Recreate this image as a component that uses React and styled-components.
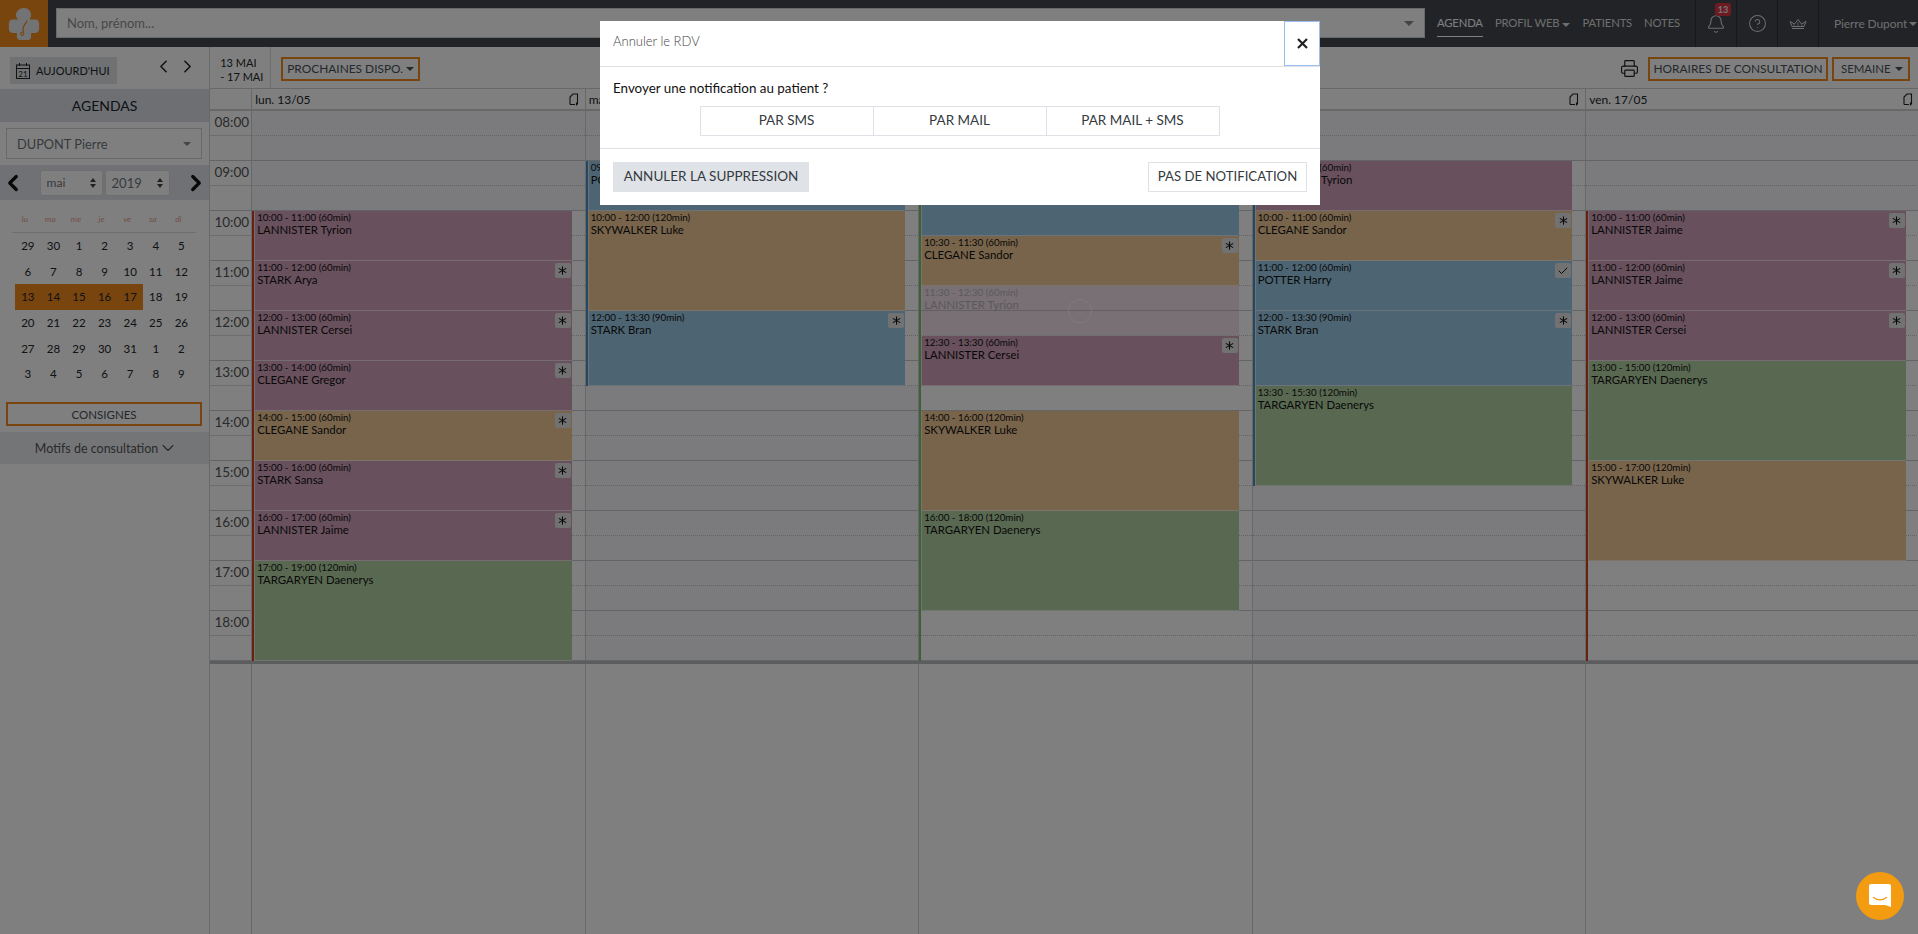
import styled, { createGlobalStyle } from "styled-components";
import { Bell, Check, ChevronDown, ChevronLeft, ChevronRight, Asterisk, Printer, CircleHelp } from "lucide-react";

const FONT = `"Lato", "Open Sans", sans-serif`;
const ORANGE = "#f28a1e";

const GlobalStyle = createGlobalStyle`
  * { box-sizing: border-box; }
  html, body { margin: 0; height: 100%; overflow: hidden; }
  body { font-family: ${FONT}; color: #212529; background: #fff; }
`;

const Page = styled.div`
  display: flex;
  flex-direction: column;
  height: 100vh;
  overflow: hidden;
`;

// Top navigation
const TopBar = styled.header`
  display: flex;
  align-items: stretch;
  flex: 0 0 47px;
  background: #43474d;
`;

const LogoBox = styled.div`
  flex: 0 0 48px;
  display: flex;
  align-items: center;
  justify-content: center;
  background: ${ORANGE};
`;

const SearchBox = styled.div`
  flex: 1;
  min-width: 0;
  margin: 8px 12px 9px 8px;
  display: flex;
  align-items: center;
  justify-content: space-between;
  padding: 0 10px;
  background: #fff;
  border: 1px solid #ced4da;
  color: #8f8f8f;
  font-size: 13px;
`;

const Caret = styled.span`
  width: 0;
  height: 0;
  margin-left: ${(p) => p.$gap || 4}px;
  display: inline-block;
  border-left: ${(p) => p.$size || 4}px solid transparent;
  border-right: ${(p) => p.$size || 4}px solid transparent;
  border-top: ${(p) => p.$size || 4}px solid ${(p) => p.$color || "currentColor"};
`;

const NavLinks = styled.nav`
  display: flex;
  align-items: center;
  gap: 12px;
  padding-right: 15px;
`;

const NavLink = styled.span`
  color: ${(p) => (p.$active ? "#fff" : "#ddd")};
  font-size: 11.3px;
  letter-spacing: -0.15px;
  line-height: 18px;
  padding: 4px 0;
  white-space: nowrap;
  border-bottom: 1px solid ${(p) => (p.$active ? "#fff" : "transparent")};
`;

const NavIcon = styled.div`
  position: relative;
  flex: 0 0 41px;
  display: flex;
  align-items: center;
  justify-content: center;
  color: #ddd;
  border-left: 1px solid #2d3034;
`;

const NotifBadge = styled.span`
  position: absolute;
  top: 3px;
  left: 19px;
  width: 16px;
  height: 13px;
  border-radius: 3px;
  background: #dc3545;
  color: #eee;
  font-size: 9px;
  font-weight: 700;
  line-height: 13px;
  text-align: center;
`;

const UserMenu = styled.div`
  flex: 0 0 100px;
  min-width: 0;
  display: flex;
  align-items: center;
  padding-left: 15px;
  color: #ddd;
  font-size: 12px;
  letter-spacing: -0.1px;
  white-space: nowrap;
  border-left: 1px solid #2d3034;
`;

const Body = styled.div`
  flex: 1;
  display: flex;
  min-height: 0;
`;

// Left column
const Sidebar = styled.aside`
  flex: 0 0 210px;
  border-right: 1px solid #ccd0d5;
  display: flex;
  flex-direction: column;
`;

const SideTools = styled.div`
  flex: 0 0 42px;
  display: flex;
  align-items: flex-start;
  padding: 10px 0 0 10px;
`;

const TodayButton = styled.button`
  display: flex;
  align-items: center;
  gap: 5px;
  width: 107px;
  height: 27px;
  padding: 0 0 0 5px;
  border: 0;
  background: #dee2e6;
  color: #212529;
  font: 11px ${FONT};
  white-space: nowrap;
`;

const WeekArrows = styled.div`
  display: flex;
  gap: 3px;
  margin: -1px 0 0 36px;
  color: #212529;
`;

const SideBand = styled.div`
  display: flex;
  align-items: center;
  justify-content: center;
  height: ${(p) => p.$h}px;
  padding-left: ${(p) => p.$pl || 0}px;
  background: ${(p) => p.$bg || "#dadfe6"};
  color: ${(p) => p.$color || "#212529"};
  font-size: ${(p) => p.$size || 14}px;
`;

const AgendaSelect = styled.div`
  display: flex;
  align-items: center;
  justify-content: space-between;
  height: 31px;
  margin: 6px 7px 6px 6px;
  padding: 0 10px;
  border: 1px solid #ced4da;
  color: #6c757d;
  font-size: 12.8px;
  background: #fff;
`;

const MonthBar = styled.div`
  height: 35px;
  display: flex;
  align-items: center;
  justify-content: space-between;
  background: #e0e3e8;
  color: #111;
`;

const MonthSelects = styled.div`
  display: flex;
  gap: 2px;
`;

const MiniSelect = styled.div`
  display: flex;
  align-items: center;
  justify-content: space-between;
  width: ${(p) => p.$w}px;
  height: 26px;
  padding: 0 6px;
  border: 1px solid #ddd;
  border-radius: 3px;
  background: #fff;
  color: #6c757d;
  font-size: ${(p) => p.$size || 12}px;
`;

const Updown = styled.span`
  display: flex;
  flex-direction: column;
  gap: 2px;
  &::before,
  &::after {
    content: "";
    border-left: 3px solid transparent;
    border-right: 3px solid transparent;
  }
  &::before { border-bottom: 4px solid #444; }
  &::after { border-top: 4px solid #444; }
`;

const MiniCal = styled.div`
  padding: 12px 15px 0 15px;
  height: 202px;
`;

const WeekHead = styled.div`
  display: grid;
  grid-template-columns: repeat(7, 25.6px);
  height: 21px;
  margin: 0 -2px 0 -3px;
  border-bottom: 1px solid #ddd;
`;

const WeekName = styled.span`
  text-align: center;
  font-size: 8.5px;
  font-style: italic;
  color: #e6a090;
  line-height: 14px;
`;

const DayGrid = styled.div`
  display: grid;
  grid-template-columns: repeat(7, 25.6px);
  grid-auto-rows: 25.6px;
`;

const MiniDay = styled.span`
  display: flex;
  align-items: center;
  justify-content: center;
  font-size: 11.5px;
  color: #212529;
  background: ${(p) => (p.$sel ? ORANGE : "transparent")};
`;

const ConsignesButton = styled.div`
  display: flex;
  align-items: center;
  justify-content: center;
  height: 24px;
  margin: 0 7px 6px 6px;
  border: 2px solid ${ORANGE};
  color: #495057;
  font-size: 11.5px;
`;

// Main area
const Main = styled.main`
  flex: 1;
  min-width: 0;
  display: flex;
  flex-direction: column;
`;

const Toolbar = styled.div`
  flex: 0 0 42px;
  display: flex;
  align-items: flex-start;
  padding: 0 8px 0 0;
  border-bottom: 1px solid #ccd0d5;
`;

const RangeLabel = styled.div`
  width: 61px;
  height: 41px;
  padding: 9px 0 0 10px;
  border-right: 1px solid #ddd;
  font-size: 11px;
  line-height: 14px;
  color: #212529;
`;

const OutlineButton = styled.div`
  display: flex;
  align-items: center;
  justify-content: ${(p) => (p.$between ? "space-between" : "center")};
  width: ${(p) => p.$w}px;
  height: 24px;
  margin: 10px 0 0 ${(p) => p.$ml || 0}px;
  padding: 0 7px 1px;
  border: 2px solid ${ORANGE};
  color: #495057;
  font-size: 11.9px;
  white-space: nowrap;
`;

const SemaineLabel = styled.span`
  font-size: 11.4px;
`;

const PrintIcon = styled.div`
  margin: 12px 9px 0 auto;
  color: #212529;
`;

const Columns = styled.div`
  display: grid;
  grid-template-columns: 41px repeat(5, 333.5px);
  flex: ${(p) => (p.$fill ? 1 : "none")};
  border-bottom: ${(p) => (p.$head ? "2px solid #ccd0d5" : p.$rule ? "3px solid #b8bbbf" : "0")};
`;

const Gutter = styled.div``;

const DayHead = styled.div`
  display: flex;
  align-items: center;
  justify-content: space-between;
  height: 20px;
  padding: 0 6px 0 3px;
  border-left: 1px solid #ccd0d5;
  font-size: 12px;
  color: #212529;
`;

const DayFill = styled.div`
  border-left: 1px solid #ccd0d5;
`;

const TimeRail = styled.div`
  display: grid;
  grid-template-rows: repeat(22, 25px);
`;

const TimeCell = styled.div`
  grid-row: span 2;
  padding-top: 2px;
  padding-right: 2px;
  text-align: right;
  font-size: 13.5px;
  line-height: 18px;
  color: #555;
  border-bottom: 1px solid #c4c8cd;
  background: linear-gradient(#0000 24px, #ddd 24px, #ddd 25px, #0000 25px);
`;

const DayBody = styled.div`
  display: grid;
  grid-template-rows: repeat(22, 25px);
  grid-template-columns: minmax(0, 1fr);
  border-left: 1px solid #ccd0d5;
`;

const Slot = styled.div`
  grid-column: 1;
  grid-row: ${(p) => p.$i + 1};
  background: ${(p) => (p.$closed ? "#f6f7fa" : "#fff")};
  border-bottom: 1px ${(p) => (p.$i % 2 ? "solid #c4c8cd" : "dotted #c4c6c9")};
`;

const DayLine = styled.div`
  grid-column: 1;
  grid-row: ${(p) => p.$from + 1} / ${(p) => p.$to + 1};
  justify-self: start;
  z-index: 1;
  width: 2px;
  background: ${(p) => p.$color};
`;

const Event = styled.div`
  position: relative;
  z-index: 2;
  grid-column: 1;
  grid-row: ${(p) => p.$from + 1} / ${(p) => p.$to + 1};
  margin: 0 13px 0 2px;
  padding: 0 3px 0 2px;
  background: ${(p) => p.$bg};
  border-left: 1px solid rgba(255, 255, 255, 0.6);
  border-bottom: 1px solid rgba(255, 255, 255, 0.6);
  color: #111;
  opacity: ${(p) => (p.$faded ? 0.32 : 1)};
`;

const EventTime = styled.div`
  font-size: 9.8px;
  line-height: 13px;
  white-space: nowrap;
`;

const EventName = styled.div`
  font-size: 11.4px;
  line-height: 11px;
  white-space: nowrap;
`;

const StatusTag = styled.span`
  position: absolute;
  top: 2px;
  right: 1px;
  width: 16px;
  height: 15px;
  display: flex;
  align-items: center;
  justify-content: center;
  background: #e4e4e4;
  border-radius: 2px;
  color: #111;
`;

const Spinner = styled.div`
  position: absolute;
  left: 50%;
  top: 50%;
  width: 24px;
  height: 24px;
  transform: translate(-50%, -50%);
  border: 1px solid rgba(255, 255, 255, 0.75);
  border-radius: 50%;
`;

const SpinnerHost = styled.div`
  position: relative;
  z-index: 3;
  grid-column: 1;
  grid-row: ${(p) => p.$from + 1} / ${(p) => p.$to + 1};
  margin: 0 13px 0 2px;
`;

// Modal
const Overlay = styled.div`
  position: fixed;
  inset: 0;
  z-index: 10;
  display: flex;
  justify-content: center;
  align-items: flex-start;
  padding: 21px 0 0 2px;
  background: rgba(0, 0, 0, 0.5);
`;

const Modal = styled.div`
  width: 720px;
  background: #fff;
`;

const ModalHead = styled.div`
  display: flex;
  align-items: stretch;
  justify-content: space-between;
  height: 46px;
  border-bottom: 1px solid #dee2e6;
`;

const ModalTitle = styled.div`
  padding: 12px 0 0 13px;
  color: #444;
  font-size: 13px;
  font-weight: 300;
`;

const CloseButton = styled.button`
  width: 36px;
  padding: 0;
  border: 1px solid #9dbff0;
  background: #fff;
  display: flex;
  align-items: center;
  justify-content: center;
`;

const ModalBody = styled.div`
  height: 82px;
  padding: 12px 13px 0;
  border-bottom: 1px solid #dee2e6;
`;

const Question = styled.div`
  font-size: 13.4px;
  line-height: 19px;
  color: #111;
`;

const ChoiceGroup = styled.div`
  display: flex;
  width: 519px;
  height: 30px;
  margin: 8px auto 0;
`;

const Choice = styled.div`
  flex: 1;
  display: flex;
  align-items: center;
  justify-content: center;
  padding-bottom: 3px;
  margin-left: -1px;
  border: 1px solid #dee2e6;
  color: #343a40;
  font-size: 13.5px;
`;

const ModalFoot = styled.div`
  display: flex;
  justify-content: space-between;
  padding: 13px;
`;

const FootButton = styled.div`
  display: flex;
  align-items: center;
  justify-content: center;
  width: ${(p) => p.$w}px;
  height: 30px;
  padding-bottom: 3px;
  background: ${(p) => (p.$solid ? "#dfe2e6" : "#fff")};
  border: 1px solid ${(p) => (p.$solid ? "#dfe2e6" : "#dee2e6")};
  color: #343a40;
  font-size: ${(p) => (p.$solid ? 13.5 : 13.2)}px;
  white-space: nowrap;
`;

const ChatBubble = styled.div`
  position: fixed;
  z-index: 20;
  right: 14px;
  bottom: 14px;
  width: 48px;
  height: 48px;
  border-radius: 50%;
  background: #f39c12;
  display: flex;
  align-items: center;
  justify-content: center;
`;

const LogoMark = () => (
  <svg width="32" height="34" viewBox="0 0 36 38" fill="#e4e6e8">
    <path d="M18 1c5 0 8 4 8 8 0 2-1 4-2 5h7c2 0 4 2 4 4v7c0 2-2 4-4 4h-5v4c0 3-2 4-4 4H14c-3 0-4-2-4-4v-4H5c-2 0-4-2-4-4v-7c0-2 2-4 4-4h7c-2-1-3-3-3-5 0-4 4-8 9-8z" />
    <path d="M21 15c0 4-4 5-4 9v4" fill="none" stroke={ORANGE} strokeWidth="1.4" />
    <circle cx="16" cy="30" r="1.8" fill="none" stroke={ORANGE} strokeWidth="1.2" />
  </svg>
);

const CalendarGlyph = () => (
  <svg width="16" height="18" viewBox="0 0 16 18" fill="none" stroke="#212529" strokeWidth="1">
    <rect x="1.5" y="3" width="13" height="13.5" />
    <path d="M1.5 6.5h13M4.5 1v3M11.5 1v3" />
    <text x="8" y="14.5" fontSize="8" fontFamily="Lato" textAnchor="middle" fill="#212529" stroke="none">21</text>
  </svg>
);

const CopyGlyph = () => (
  <svg width="10" height="13" viewBox="0 0 10 13" fill="none" stroke="#222" strokeWidth="1.1">
    <path d="M1 11.500V4l3-3h4.500v10.500M1 11.500h5M7.500 9.500v3" />
  </svg>
);

const CrownGlyph = () => (
  <svg width="18" height="12" viewBox="0 0 18 12" fill="none" stroke="#ddd" strokeWidth="1">
    <path d="M3 10.500h12M3 8.500L1 3.500l4.500 2.500L9 1.500l3.500 4.500L17 3.500l-2 5z" />
    <path d="M5.500 6l-1 2.500M12.500 6l1 2.500M9 4v4.500" strokeWidth="0.7" />
  </svg>
);

const ChatGlyph = () => (
  <svg width="24" height="26" viewBox="0 0 24 26">
    <path d="M3 1h18a2 2 0 0 1 2 2v21l-6-2H3a2 2 0 0 1-2-2V3a2 2 0 0 1 2-2z" fill="#fff" />
    <path d="M5.500 14.500c4 3 9 3 13 0" fill="none" stroke="#f39c12" strokeWidth="1.300" strokeLinecap="round" />
  </svg>
);

const COLORS = { mauve: "#d2a0ba", tan: "#f0c896", blue: "#9ac8e4", green: "#b2d2a2" };
const slot = (time) => {
  const [h, m] = time.split(":").map(Number);
  return (h - 8) * 2 + (m === 30 ? 1 : 0);
};

const ev = (start, end, mins, name, color, tag, faded) => ({ start, end, mins, name, color, tag, faded });

const DAYS = [
  {
    label: "lun. 13/05",
    line: ["#d2401e", "10:00", "19:00"],
    closed: [[0, 4]],
    events: [
      ev("10:00", "11:00", 60, "LANNISTER Tyrion", "mauve"),
      ev("11:00", "12:00", 60, "STARK Arya", "mauve", "star"),
      ev("12:00", "13:00", 60, "LANNISTER Cersei", "mauve", "star"),
      ev("13:00", "14:00", 60, "CLEGANE Gregor", "mauve", "star"),
      ev("14:00", "15:00", 60, "CLEGANE Sandor", "tan", "star"),
      ev("15:00", "16:00", 60, "STARK Sansa", "mauve", "star"),
      ev("16:00", "17:00", 60, "LANNISTER Jaime", "mauve", "star"),
      ev("17:00", "19:00", 120, "TARGARYEN Daenerys", "green"),
    ],
  },
  {
    label: "mar. 14/05",
    line: ["#4a8fc4", "09:00", "13:30"],
    closed: [[0, 2], [11, 22]],
    events: [
      ev("09:00", "10:00", 60, "POTTER Harry", "blue"),
      ev("10:00", "12:00", 120, "SKYWALKER Luke", "tan"),
      ev("12:00", "13:30", 90, "STARK Bran", "blue", "star"),
    ],
  },
  {
    label: "mer. 15/05",
    line: ["#7cc06a", "09:00", "19:00"],
    closed: [[0, 2]],
    events: [
      ev("09:00", "10:30", 90, "STARK Bran", "blue"),
      ev("10:30", "11:30", 60, "CLEGANE Sandor", "tan", "star"),
      ev("11:30", "12:30", 60, "LANNISTER Tyrion", "mauve", null, true),
      ev("12:30", "13:30", 60, "LANNISTER Cersei", "mauve", "star"),
      ev("14:00", "16:00", 120, "SKYWALKER Luke", "tan"),
      ev("16:00", "18:00", 120, "TARGARYEN Daenerys", "green"),
    ],
  },
  {
    label: "jeu. 16/05",
    line: ["#4a8fc4", "09:00", "15:30"],
    closed: [[0, 2], [15, 22]],
    events: [
      ev("09:00", "10:00", 60, "LANNISTER Tyrion", "mauve"),
      ev("10:00", "11:00", 60, "CLEGANE Sandor", "tan", "star"),
      ev("11:00", "12:00", 60, "POTTER Harry", "blue", "check"),
      ev("12:00", "13:30", 90, "STARK Bran", "blue", "star"),
      ev("13:30", "15:30", 120, "TARGARYEN Daenerys", "green"),
    ],
  },
  {
    label: "ven. 17/05",
    line: ["#d2401e", "10:00", "19:00"],
    closed: [[0, 4]],
    events: [
      ev("10:00", "11:00", 60, "LANNISTER Jaime", "mauve", "star"),
      ev("11:00", "12:00", 60, "LANNISTER Jaime", "mauve", "star"),
      ev("12:00", "13:00", 60, "LANNISTER Cersei", "mauve", "star"),
      ev("13:00", "15:00", 120, "TARGARYEN Daenerys", "green"),
      ev("15:00", "17:00", 120, "SKYWALKER Luke", "tan"),
    ],
  },
];

const HOURS = ["08:00", "09:00", "10:00", "11:00", "12:00", "13:00", "14:00", "15:00", "16:00", "17:00", "18:00"];
const WEEKDAYS = ["lu", "ma", "me", "je", "ve", "sa", "di"];
const MONTH = [29, 30, 1, 2, 3, 4, 5, 6, 7, 8, 9, 10, 11, 12, 13, 14, 15, 16, 17, 18, 19, 20, 21, 22, 23, 24, 25, 26, 27, 28, 29, 30, 31, 1, 2, 3, 4, 5, 6, 7, 8, 9];

function DayColumn({ day }) {
  const isClosed = (i) => day.closed.some(([a, b]) => i >= a && i < b);
  return (
    <DayBody>
      {Array.from({ length: 22 }, (_, i) => (
        <Slot key={i} $i={i} $closed={isClosed(i)} />
      ))}
      <DayLine $color={day.line[0]} $from={slot(day.line[1])} $to={slot(day.line[2])} />
      {day.events.map((e) => (
        <Event key={e.start} $from={slot(e.start)} $to={slot(e.end)} $bg={COLORS[e.color]} $faded={e.faded}>
          <EventTime>{`${e.start} - ${e.end} (${e.mins}min)`}</EventTime>
          <EventName>{e.name}</EventName>
          {e.tag && (
            <StatusTag>
              {e.tag === "star" ? <Asterisk size={15} strokeWidth={1.7} /> : <Check size={12} strokeWidth={2} />}
            </StatusTag>
          )}
        </Event>
      ))}
      {day.events.filter((e) => e.faded).map((e) => (
        <SpinnerHost key={e.start} $from={slot(e.start)} $to={slot(e.end)}>
          <Spinner />
        </SpinnerHost>
      ))}
    </DayBody>
  );
}

export default function App() {
  return (
    <>
      <GlobalStyle />
      <Page>
        <TopBar>
          <LogoBox>
            <LogoMark />
          </LogoBox>
          <SearchBox>
            Nom, prénom...
            <Caret $size={5} $color="#888" />
          </SearchBox>
          <NavLinks>
            <NavLink $active>AGENDA</NavLink>
            <NavLink>
              PROFIL WEB
              <Caret $gap={3} />
            </NavLink>
            <NavLink>PATIENTS</NavLink>
            <NavLink>NOTES</NavLink>
          </NavLinks>
          <NavIcon>
            <Bell size={20} strokeWidth={1.3} />
            <NotifBadge>13</NotifBadge>
          </NavIcon>
          <NavIcon>
            <CircleHelp size={19} strokeWidth={1.3} />
          </NavIcon>
          <NavIcon>
            <CrownGlyph />
          </NavIcon>
          <UserMenu>
            Pierre Dupont
            <Caret $gap={2} />
          </UserMenu>
        </TopBar>
        <Body>
          <Sidebar>
            <SideTools>
              <TodayButton>
                <CalendarGlyph />
                AUJOURD'HUI
              </TodayButton>
              <WeekArrows>
                <ChevronLeft size={21} strokeWidth={1.8} />
                <ChevronRight size={21} strokeWidth={1.8} />
              </WeekArrows>
            </SideTools>
            <SideBand $h={33}>AGENDAS</SideBand>
            <AgendaSelect>
              DUPONT Pierre
              <Caret $size={4} $color="#888" />
            </AgendaSelect>
            <MonthBar>
              <ChevronLeft size={26} strokeWidth={3} />
              <MonthSelects>
                <MiniSelect $w={63}>
                  mai
                  <Updown />
                </MiniSelect>
                <MiniSelect $w={65} $size={13}>
                  2019
                  <Updown />
                </MiniSelect>
              </MonthSelects>
              <ChevronRight size={26} strokeWidth={3} />
            </MonthBar>
            <MiniCal>
              <WeekHead>
                {WEEKDAYS.map((d) => (
                  <WeekName key={d}>{d}</WeekName>
                ))}
              </WeekHead>
              <DayGrid>
                {MONTH.map((d, i) => (
                  <MiniDay key={i} $sel={i >= 14 && i <= 18}>
                    {d}
                  </MiniDay>
                ))}
              </DayGrid>
            </MiniCal>
            <ConsignesButton>CONSIGNES</ConsignesButton>
            <SideBand $h={32} $bg="#e9ebef" $color="#555" $size={12.5} $pl={4}>
              Motifs de consultation
              <ChevronDown size={20} strokeWidth={1.4} />
            </SideBand>
          </Sidebar>
          <Main>
            <Toolbar>
              <RangeLabel>
                13 MAI
                <br />- 17 MAI
              </RangeLabel>
              <OutlineButton $w={139} $ml={10}>
                PROCHAINES DISPO.
                <Caret $gap={3} />
              </OutlineButton>
              <PrintIcon>
                <Printer size={19} strokeWidth={1.5} />
              </PrintIcon>
              <OutlineButton $w={180}>HORAIRES DE CONSULTATION</OutlineButton>
              <OutlineButton $w={78} $ml={4} $between>
                <SemaineLabel>SEMAINE</SemaineLabel>
                <Caret />
              </OutlineButton>
            </Toolbar>
            <Columns $head>
              <Gutter />
              {DAYS.map((d) => (
                <DayHead key={d.label}>
                  {d.label}
                  <CopyGlyph />
                </DayHead>
              ))}
            </Columns>
            <Columns $rule>
              <TimeRail>
                {HOURS.map((h) => (
                  <TimeCell key={h}>{h}</TimeCell>
                ))}
              </TimeRail>
              {DAYS.map((d) => (
                <DayColumn key={d.label} day={d} />
              ))}
            </Columns>
            <Columns $fill>
              <Gutter />
              {DAYS.map((d) => (
                <DayFill key={d.label} />
              ))}
            </Columns>
          </Main>
        </Body>
      </Page>
      <Overlay>
        <Modal>
          <ModalHead>
            <ModalTitle>Annuler le RDV</ModalTitle>
            <CloseButton>
              <svg width="13" height="13" viewBox="0 0 13 13" stroke="#222" strokeWidth="2.2">
                <path d="M2 2l9 9M11 2l-9 9" />
              </svg>
            </CloseButton>
          </ModalHead>
          <ModalBody>
            <Question>Envoyer une notification au patient ?</Question>
            <ChoiceGroup>
              <Choice>PAR SMS</Choice>
              <Choice>PAR MAIL</Choice>
              <Choice>PAR MAIL + SMS</Choice>
            </ChoiceGroup>
          </ModalBody>
          <ModalFoot>
            <FootButton $w={196} $solid>
              ANNULER LA SUPPRESSION
            </FootButton>
            <FootButton $w={159}>PAS DE NOTIFICATION</FootButton>
          </ModalFoot>
        </Modal>
      </Overlay>
      <ChatBubble>
        <ChatGlyph />
      </ChatBubble>
    </>
  );
}
